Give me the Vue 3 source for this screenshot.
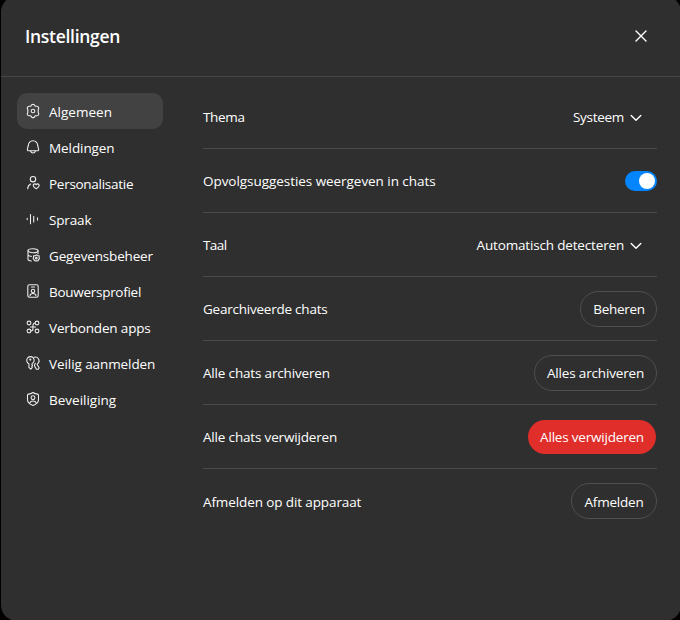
<script setup>
const nav = [
  { id: 'general', label: 'Algemeen' },
  { id: 'bell', label: 'Meldingen' },
  { id: 'person', label: 'Personalisatie' },
  { id: 'voice', label: 'Spraak' },
  { id: 'data', label: 'Gegevensbeheer' },
  { id: 'builder', label: 'Bouwersprofiel' },
  { id: 'apps', label: 'Verbonden apps' },
  { id: 'keys', label: 'Veilig aanmelden' },
  { id: 'shield', label: 'Beveiliging' },
]
const rows = [
  { label: 'Thema', kind: 'select', value: 'Systeem' },
  { label: 'Opvolgsuggesties weergeven in chats', kind: 'toggle' },
  { label: 'Taal', kind: 'select', value: 'Automatisch detecteren' },
  { label: 'Gearchiveerde chats', kind: 'button', value: 'Beheren' },
  { label: 'Alle chats archiveren', kind: 'button', value: 'Alles archiveren' },
  { label: 'Alle chats verwijderen', kind: 'danger', value: 'Alles verwijderen' },
  { label: 'Afmelden op dit apparaat', kind: 'button', value: 'Afmelden' },
]
</script>

<template>
  <div class="page">
    <div class="panel">
      <header class="header">
        <h1>Instellingen</h1>
        <svg class="close" viewBox="0 0 12 12"><path d="M1 1l10 10M11 1L1 11" /></svg>
      </header>
      <div class="body">
        <nav class="nav">
          <div v-for="(n, i) in nav" :key="n.id" class="item" :class="{ active: i === 0 }">
            <svg class="icon" viewBox="0 0 16 16">
              <g v-if="n.id === 'general'">
                <path d="M6.7 1.8Q8 .9 9.300 1.800L10.200 3.100L11.900 3.200Q13.700 3.400 13.800 5L13.200 6.500V9.500L13.800 11Q13.700 12.600 11.900 12.800L10.200 12.900L9.300 14.200Q8 15.100 6.700 14.200L5.800 12.900L4.100 12.800Q2.300 12.600 2.200 11L2.800 9.500V6.500L2.200 5Q2.300 3.400 4.100 3.200L5.800 3.100Z" />
                <circle cx="8" cy="8" r="1.8" />
              </g>
              <g v-else-if="n.id === 'bell'">
                <path d="M3.300 6.500a4.700 4.700 0 0 1 9.400 0l.9 3.600q.3 1.600-1.200 1.600H3.600q-1.500 0-1.200-1.600z" />
                <path d="M5.600 12q.6 2 2.400 2t2.400-2" />
              </g>
              <g v-else-if="n.id === 'person'">
                <circle cx="8" cy="4.200" r="2.700" />
                <path d="M2.700 13.800q.1-3.400 2.900-4.800" />
                <path d="M11.200 13.800C8.700 12.300 8 11.200 8.300 10c.4-1.300 2.100-1.500 2.900-.3.800-1.200 2.500-1 2.900.3.300 1.200-.4 2.300-2.900 3.800z" />
              </g>
              <g v-else-if="n.id === 'voice'">
                <path d="M2.200 7.400v1.200M5.500 3.500v9.300M8.700 5.300v5.600M12.500 6.900v2.200" />
              </g>
              <g v-else-if="n.id === 'data'">
                <ellipse cx="8" cy="3.700" rx="5" ry="2" />
                <path d="M3 3.700v8.500q0 1.500 3.300 1.800M3 7.900q.5 1.300 3.300 1.500M13 3.700v3" />
                <path d="M11.300 7.900l1.300.8 1.500.1v1.600l.5 1.200-1 .9-.5 1.200-1.800.2-1.700-.2-.6-1.200-.9-.9.500-1.300v-1.400l1.500-.2z" />
                <circle cx="11.300" cy="11.200" r=".8" />
              </g>
              <g v-else-if="n.id === 'builder'">
                <rect x="2.800" y="1.800" width="10.400" height="12.400" rx="1.700" />
                <path d="M6.400 4h3.200M5 12.700q.2-2.200 3-2.200t3 2.200" />
                <circle cx="8" cy="8" r="1.700" />
              </g>
              <g v-else-if="n.id === 'apps'">
                <circle cx="4" cy="4" r="1.900" /><circle cx="12" cy="4" r="1.900" />
                <circle cx="4" cy="12" r="1.900" /><circle cx="12" cy="12" r="1.900" />
                <path d="M10.100 4Q8 4.200 8 6.500v3Q8 11.800 5.900 12M5.500 8h5" />
              </g>
              <g v-else-if="n.id === 'keys'">
                <path d="M3.900 8.700A3.700 3.700 0 1 1 7.500 8.400l-.7.900.7 1-.8 1 .6 1-1.500 1.800-1.900-1.700z" />
                <circle cx="5.300" cy="4.600" r=".5" />
                <path d="M9 2.300a3.700 3.700 0 0 1 4 6l-.8 1.100 1.900 3.300-.6 1.400-2.100.1-2.100-3.700 1-2.200" />
              </g>
              <g v-else>
                <path d="M8 1.500q2 1.400 4.500 1.600 1 .2 1 1.300v4.100q0 4-5.500 6Q2.500 12.500 2.500 8.500V4.400q0-1.100 1-1.300Q6 2.900 8 1.500z" />
                <circle cx="8" cy="6.700" r="1.900" />
                <path d="M4.700 12q.9-2 3.300-2t3.300 2" />
              </g>
            </svg>
            <span :class="n.id">{{ n.label }}</span>
          </div>
        </nav>
        <main class="rows">
          <section v-for="(r, i) in rows" :key="r.label" class="row">
            <span :class="'r' + i">{{ r.label }}</span>
            <div v-if="r.kind === 'select'" class="select">
              <span :class="'v' + i">{{ r.value }}</span>
              <svg class="chev" viewBox="0 0 12 8"><path d="M1.200 1.500L6 6.300l4.800-4.800" /></svg>
            </div>
            <div v-else-if="r.kind === 'toggle'" class="toggle"><i></i></div>
            <button v-else :class="['btn', 'b' + i, { danger: r.kind === 'danger' }]">
              <span :class="'v' + i">{{ r.value }}</span>
            </button>
          </section>
        </main>
      </div>
    </div>
  </div>
</template>

<style>
body { background: #000; overflow: hidden; }
</style>

<style scoped>
.page { height: 620px; overflow: hidden; background: #000; font: 13.5px/20px "Open Sans", "Noto Sans", sans-serif; color: #fff; letter-spacing: -0.08px; }
.panel { width: 680px; height: 625px; margin: -4px 0 0 1px; background: #2f2f2f; border-radius: 16px; box-sizing: border-box; }
.header { box-sizing: border-box; height: 81px; padding: 0 34px 0 24px; border-bottom: 1px solid #464646; display: flex; align-items: center; justify-content: space-between; }
h1 { margin: 0; font-size: 17.5px; line-height: 28px; font-weight: 600; letter-spacing: -0.3px; }
.close { width: 12px; height: 12px; }
svg { fill: none; stroke: #fff; stroke-width: 1.4; stroke-linecap: round; stroke-linejoin: round; display: block; }
.body { display: flex; gap: 40px; padding-left: 16px; }
.nav { width: 146px; padding-top: 16px; }
.item { box-sizing: border-box; height: 36px; padding: 1px 8px 0; display: flex; align-items: center; gap: 8px; border-radius: 10px; white-space: nowrap; }
.active { background: #424242; }
.icon { width: 16px; height: 16px; flex: none; margin-top: -1px; stroke: #ececec; stroke-width: 1.1; }
.rows { width: 454px; padding-top: 8px; }
.row { box-sizing: border-box; height: 64px; padding: 1px 0 0; border-bottom: 1px solid #4c4c4c; display: flex; align-items: center; justify-content: space-between; white-space: nowrap; }
.row:last-child { border-bottom: 0; }
.select { display: flex; align-items: center; gap: 6px; padding-right: 15px; }
.chev { width: 12px; height: 8px; position: relative; top: 1px; }
.toggle { box-sizing: border-box; width: 32px; height: 20px; border-radius: 10px; background: #0285ff; padding: 2px; display: flex; justify-content: flex-end; }
.toggle i { width: 16px; height: 16px; border-radius: 50%; background: #fff; }
.btn { box-sizing: border-box; height: 36px; padding: 0; border: 1px solid #4f4f4f; border-radius: 18px; background: transparent; color: #fff; font: inherit; letter-spacing: inherit; display: flex; align-items: center; justify-content: center; }
.b3 { width: 77px; padding-left: 1px; }
.b4 { width: 123px; }
.b5 { width: 128px; }
.b6 { width: 86px; margin-bottom: 2px; padding-top: 2px; }
.danger { height: 34px; margin-right: 1px; border: 0; background: #e02e2a; }

/* tracking per label */
.general { letter-spacing: 0.02px; }
.person, .builder { letter-spacing: -0.28px; }
.voice, .data, .apps { letter-spacing: -0.16px; }
.shield { letter-spacing: 0; }
.r0 { letter-spacing: -0.35px; }
.r1 { letter-spacing: -0.05px; }
.r2 { letter-spacing: -0.6px; }
.r3 { letter-spacing: -0.23px; }
.r4, .r5, .v2, .v4 { letter-spacing: -0.17px; }
.r6 { letter-spacing: -0.11px; }
.v0, .v3 { letter-spacing: -0.3px; }
.v5, .v6 { letter-spacing: -0.2px; }
</style>
